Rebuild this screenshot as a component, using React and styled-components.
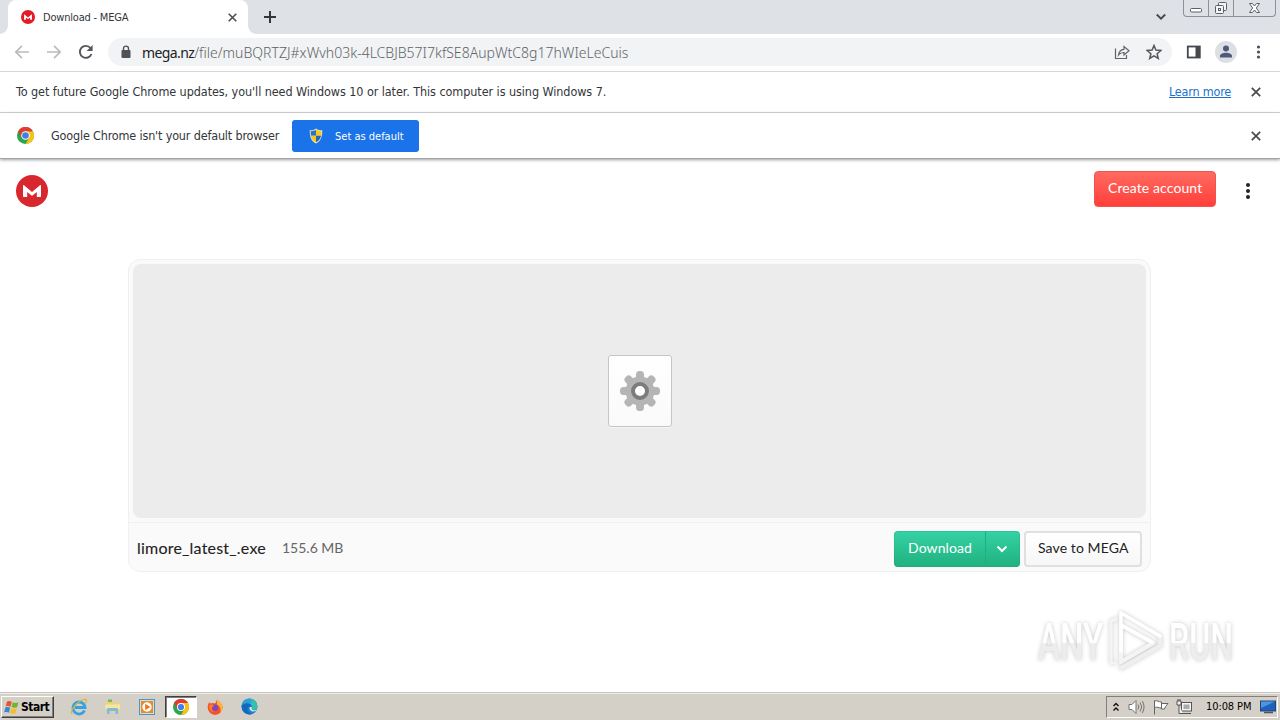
import React from "react";
import styled, { createGlobalStyle, css } from "styled-components";

const GlobalStyle = createGlobalStyle`
    * {
        box-sizing: border-box;
    }
    body {
        margin: 0;
        overflow: hidden;
        background: #fff;
        font-family: "DejaVu Sans Condensed", "DejaVu Sans", sans-serif;
    }
    svg {
        display: block;
        flex: none;
    }
`;

const Screen = styled.div`
    width: 1280px;
    height: 720px;
    display: flex;
    flex-direction: column;
    overflow: hidden;
`;

const Label = styled.span`
    flex: none;
    width: ${(p) => p.$width}px;
    padding-bottom: ${(p) => p.$lift || 0}px;
    white-space: nowrap;
    font-size: ${(p) => p.$size || 12}px;
    letter-spacing: ${(p) => p.$spacing || 0}px;
    color: ${(p) => p.$color || "#333639"};
`;

/* Browser frame */
const TabStrip = styled.div`
    height: 34px;
    flex: none;
    display: flex;
    align-items: flex-start;
    background: #dee1e6;
    padding-left: 8px;
`;
const Tab = styled.div`
    position: relative;
    width: 240px;
    height: 34px;
    display: flex;
    align-items: center;
    padding: 0 11px 0 13px;
    background: #fff;
    border-radius: 8px 8px 0 0;
    &::before,
    &::after {
        content: "";
        position: absolute;
        bottom: 0;
        width: 8px;
        height: 8px;
    }
    &::before {
        left: -8px;
        background: radial-gradient(circle at 0 0, #dee1e6 7.5px, #fff 8px);
    }
    &::after {
        right: -8px;
        background: radial-gradient(circle at 100% 0, #dee1e6 7.5px, #fff 8px);
    }
`;
const TabIcon = styled.div`
    width: 22px;
`;
const Grow = styled.div`
    flex: 1;
`;
const NewTab = styled.div`
    padding: 11px 0 0 16px;
`;
const TabSearch = styled.div`
    padding: 13px 17px 0 0;
`;
const WindowButtons = styled.div`
    display: flex;
    width: 93px;
    height: 17px;
    margin-right: 4px;
    border: 1px solid #8d9096;
    border-top: 0;
    border-radius: 0 0 4px 4px;
`;
const WindowButton = styled.div`
    width: ${(p) => p.$width}px;
    display: flex;
    justify-content: center;
    border-left: ${(p) => (p.$first ? "0" : "1px solid #8d9096")};
`;

const Toolbar = styled.div`
    height: 38px;
    flex: none;
    display: flex;
    align-items: center;
    padding: 0 16px 1px 14px;
    background: #fff;
    border-bottom: 1px solid #d5d7da;
`;
const NavButtons = styled.div`
    display: flex;
    gap: 16px;
    width: 94px;
`;
const AddressBar = styled.div`
    width: 1064px;
    height: 28px;
    display: flex;
    align-items: center;
    padding: 0 10px 0 12px;
    border-radius: 14px;
    background: #f1f3f4;
`;
const LockBox = styled.div`
    width: 22px;
`;
const Url = styled.span`
    flex: 1;
    white-space: nowrap;
    font-family: "Noto Sans", "DejaVu Sans Condensed", sans-serif;
    font-weight: 300;
    font-size: 14px;
    letter-spacing: 0.01px;
    color: #5f6368;
`;
const UrlHost = styled.span`
    font-weight: 400;
    letter-spacing: -0.6px;
    color: #202124;
`;
const AddressIcons = styled.div`
    display: flex;
    gap: 16px;
`;
const ToolbarIcons = styled.div`
    flex: 1;
    display: flex;
    align-items: center;
    justify-content: space-between;
    padding-left: 14px;
`;
const Avatar = styled.div`
    width: 22px;
    height: 22px;
    margin-right: 3px;
    border-radius: 50%;
    background: #dcdfe4;
`;

const InfoBar = styled.div`
    height: ${(p) => p.$height}px;
    flex: none;
    display: flex;
    align-items: center;
    padding: 0 19px 0 16px;
    background: #fff;
    border-bottom: 1px solid #d5d7da;
    ${(p) =>
        p.$last &&
        css`
            position: relative;
            border-bottom-color: #a3a3a3;
            box-shadow: 0 1px 3px rgba(0, 0, 0, 0.38);
        `}
`;
const LearnMore = styled(Label)`
    margin-right: 19px;
    text-decoration: underline;
`;
const InfoIcon = styled.div`
    width: 35px;
    padding-left: 1px;
`;
const DefaultButton = styled.div`
    width: 127px;
    height: 32px;
    display: flex;
    align-items: center;
    gap: 12px;
    padding-left: 17px;
    background: #1a73e8;
    border-radius: 3px;
`;
const DefaultLabel = styled(Label)`
    padding-top: 1px;
`;

/* Page */
const Page = styled.main`
    flex: 1;
    min-height: 0;
    display: flex;
    flex-direction: column;
    font-family: Lato, sans-serif;
`;
const PageHeader = styled.header`
    height: 100px;
    flex: none;
    display: flex;
    align-items: flex-start;
    justify-content: space-between;
    padding: 12px 29px 0 16px;
`;
const LogoBox = styled.div`
    padding-top: 4px;
`;
const HeaderActions = styled.div`
    display: flex;
    align-items: flex-start;
    gap: 29px;
`;
const MenuDots = styled.div`
    padding-top: 10px;
`;
const Button = styled.div`
    height: 36px;
    width: ${(p) => p.$width}px;
    padding-left: 14px;
    line-height: 33px;
    font-size: 14px;
    letter-spacing: ${(p) => p.$spacing || 0}px;
    white-space: nowrap;
    border-radius: 4px;
    color: #fff;
`;
const CreateButton = styled(Button)`
    background: linear-gradient(#ff6a60, #ff3f3a);
    border: 1px solid #f0544d;
    padding-left: 13px;
    line-height: 32px;
`;
const Card = styled.section`
    width: 1023px;
    height: 313px;
    flex: none;
    display: flex;
    flex-direction: column;
    margin-left: 128px;
    border: 1px solid #f0f0f0;
    border-radius: 12px;
    overflow: hidden;
    background: #fafafa;
`;
const Preview = styled.div`
    height: 254px;
    margin: 4px;
    display: flex;
    align-items: center;
    justify-content: center;
    border-radius: 8px;
    background: #ececec;
`;
const FileTile = styled.div`
    width: 64px;
    height: 72px;
    display: flex;
    align-items: center;
    justify-content: center;
    border: 1px solid #c6c6c6;
    border-radius: 3px;
    background: linear-gradient(#fff, #fafafa);
    box-shadow: 0 1px 1px #f7f7f7;
`;
const CardFooter = styled.div`
    flex: 1;
    display: flex;
    align-items: center;
    padding: 3px 8px 0 8px;
    border-top: 1px solid #f0f0f0;
`;
const FileName = styled(Label)`
    -webkit-text-stroke: 0.1px #222;
`;
const DownloadGroup = styled.div`
    display: flex;
    width: 126px;
    margin-right: 4px;
    border-radius: 4px;
    background: linear-gradient(#35d2a5, #20b17f);
    box-shadow: inset 0 0 0 1px rgba(20, 150, 105, 0.2);
`;
const DropArrow = styled.div`
    width: 35px;
    display: flex;
    align-items: center;
    justify-content: center;
    padding-right: 2px;
    border-left: 1px solid #22ae80;
`;
const SaveButton = styled(Button)`
    padding-left: 12px;
    line-height: 30px;
    color: #222;
    border: 2px solid #e0e0e0;
    background: linear-gradient(#fff, #f7f7f7);
`;

/* Watermark floats over the page */
const Watermark = styled.div`
    position: absolute;
    left: 1038px;
    top: 606px;
    width: 195px;
    height: 70px;
    display: flex;
    align-items: center;
    justify-content: space-between;
    filter: drop-shadow(0 0 2px rgba(0, 0, 0, 0.22));
`;
const WordSlot = styled.div`
    width: 64px;
    padding-top: 3px;
`;
const WatermarkWord = styled.div`
    width: max-content;
    font-family: Roboto, sans-serif;
    font-weight: 500;
    font-size: 51px;
    line-height: 70px;
    transform: scaleX(${(p) => p.$stretch});
    transform-origin: 0 50%;
    background: linear-gradient(#fff 49%, #ededed 51%);
    background-clip: text;
    color: transparent;
`;

/* Windows taskbar */
const Taskbar = styled.footer`
    height: 28px;
    flex: none;
    display: flex;
    align-items: center;
    padding: 0 2px 0 1px;
    background: #d4d0c8;
    border-top: 1px solid #c9c6bf;
    box-shadow: inset 0 1px 0 #efede8;
`;
const StartButton = styled.div`
    width: 53px;
    height: 22px;
    display: flex;
    align-items: center;
    gap: 1px;
    padding-left: 1px;
    border: 1px solid;
    border-color: #fff #404040 #404040 #fff;
    box-shadow: inset -1px -1px 0 #808080;
    font-weight: 700;
`;
const QuickLaunch = styled.div`
    display: flex;
    margin-left: 8px;
`;
const TaskItem = styled.div`
    width: 34px;
    height: 22px;
    display: flex;
    align-items: center;
    justify-content: center;
    ${(p) =>
        p.$active &&
        css`
            width: 32px;
            margin: 0 1px;
            background: #fff;
            border: 1px solid;
            border-color: #404040 #fff #fff #404040;
            box-shadow: inset 1px 1px 0 #808080;
        `}
`;
const Tray = styled.div`
    width: 172px;
    height: 22px;
    display: flex;
    align-items: center;
    padding-left: 6px;
    border: 1px solid;
    border-color: #808080 #fff #fff #808080;
`;
const TraySlot = styled.div`
    width: ${(p) => p.$width}px;
`;

const CloseIcon = ({ size = 10, color = "#4b4e52", stroke = 1.8 }) => (
    <svg width={size} height={size} viewBox="0 0 10 10">
        <path d="M.8.8l8.4 8.4M9.2.8L.8 9.2" stroke={color} strokeWidth={stroke} />
    </svg>
);

const MegaLogo = ({ size, color = "#d9272e" }) => (
    <svg width={size} height={size} viewBox="0 0 32 32">
        <circle cx="16" cy="16" r="16" fill={color} />
        <path
            d="M7 21.500V10.700c0-.6.600-.8 1-.4l8 6.700 8-6.700c.4-.4 1-.2 1 .4v10.800c0 .3-.2.500-.5.500h-3.200c-.3 0-.5-.2-.5-.5v-4.600l-4.300 3.600c-.3.300-.7.300-1 0l-4.300-3.600v4.600c0 .3-.2.500-.5.500H7.500c-.3 0-.5-.2-.5-.5z"
            fill="#fff"
        />
    </svg>
);

const ChromeIcon = ({ size }) => (
    <svg width={size} height={size} viewBox="0 0 32 32">
        <circle cx="16" cy="16" r="16" fill="#2da44e" />
        <path d="M16 8h13.860A16 16 0 0 1 16 32l6.930-12z" fill="#fbc116" />
        <path d="M2.140 8A16 16 0 0 1 29.860 8H16v8l-6.930 4z" fill="#e33b2e" />
        <circle cx="16" cy="16" r="8" fill="#fff" />
        <circle cx="16" cy="16" r="6.200" fill="#3f7fe8" />
    </svg>
);

const ShieldIcon = () => (
    <svg width="14" height="16" viewBox="0 0 14 16">
        <path d="M7 .5c2 1.500 4 1.700 6.300 1.700 0 6-1 10.500-6.300 13.300C1.700 12.700.7 8.200.7 2.200 3 2.200 5 2 7 .5z" fill="#e8e3bb" />
        <path d="M7 1.800v6H2C1.800 6.400 1.700 4.800 1.700 3.200 3.800 3.100 5.400 2.900 7 1.800z" fill="#2f72c4" />
        <path d="M7 1.800v6h5c.2-1.400.3-3 .3-4.600C10.200 3.100 8.600 2.900 7 1.800z" fill="#f5c721" />
        <path d="M2 7.800h5v6.500C4 12.600 2.500 10.500 2 7.800z" fill="#f5c721" />
        <path d="M12 7.800H7v6.500c3-1.700 4.500-3.800 5-6.500z" fill="#2566b5" />
    </svg>
);

const Dots = ({ size, r, gap, color }) => (
    <svg width="6" height={size} viewBox={`0 0 6 ${size}`} fill={color}>
        {[-1, 0, 1].map((n) => (
            <circle key={n} cx="3" cy={size / 2 + n * gap} r={r} />
        ))}
    </svg>
);

const GearIcon = () => (
    <svg width="42" height="42" viewBox="-21 -21 42 42">
        <g fill="#b5b5b5">
            {[0, 45, 90, 135].map((angle) => (
                <rect key={angle} x="-4" y="-20" width="8" height="40" rx="3.500" transform={`rotate(${angle})`} />
            ))}
            <circle r="14.500" />
        </g>
        <circle r="7" fill="#fff" stroke="#7c7c7c" strokeWidth="4" />
    </svg>
);

const PlayMark = () => (
    <svg width="58" height="64" viewBox="0 0 58 64" fill="none" strokeLinejoin="round" strokeLinecap="round">
        <path d="M9 10l-5 2v42h4" stroke="#f4f4f4" strokeWidth="3" />
        <path d="M14 52V16l32 18-32 19" stroke="#f4f4f4" strokeWidth="4" />
        <path d="M14 59l39-22v-9" stroke="#efefef" strokeWidth="4" />
        <path d="M14 42V4l39 23M14 16l31 17" stroke="#fff" strokeWidth="3.500" />
    </svg>
);

const NavIcons = () => (
    <NavButtons>
        <svg width="16" height="16" viewBox="0 0 16 16" fill="none" stroke="#b9bbbe" strokeWidth="1.700">
            <path d="M15 8H2M8 1.800L1.800 8 8 14.200" />
        </svg>
        <svg width="16" height="16" viewBox="0 0 16 16" fill="none" stroke="#b9bbbe" strokeWidth="1.700">
            <path d="M1 8h13M8 1.800L14.200 8 8 14.200" />
        </svg>
        <svg width="16" height="16" viewBox="0 0 16 16">
            <path d="M13.500 10A6 6 0 1 1 12.500 4" fill="none" stroke="#53565a" strokeWidth="1.900" />
            <path d="M14.600 1v6H8.600z" fill="#53565a" />
        </svg>
    </NavButtons>
);

const BrowserFrame = () => (
    <>
        <TabStrip>
            <Tab>
                <TabIcon>
                    <MegaLogo size={14} color="#e21b24" />
                </TabIcon>
                <Label $width={86} $size={11} $spacing={-0.2}>
                    Download - MEGA
                </Label>
                <Grow />
                <CloseIcon size={9} />
            </Tab>
            <NewTab>
                <svg width="12" height="12" viewBox="0 0 12 12">
                    <path d="M6 0v12M0 6h12" stroke="#33363b" strokeWidth="2" />
                </svg>
            </NewTab>
            <Grow />
            <TabSearch>
                <svg width="10" height="8" viewBox="0 0 10 8">
                    <path d="M.8 1.500L5 5.700 9.200 1.500" fill="none" stroke="#44474b" strokeWidth="1.800" />
                </svg>
            </TabSearch>
            <WindowButtons>
                <WindowButton $first $width={24}>
                    <svg width="14" height="16" viewBox="0 0 14 16">
                        <rect x="1.500" y="8.500" width="11" height="3.500" rx="1" fill="#fff" stroke="#5d6065" />
                    </svg>
                </WindowButton>
                <WindowButton $width={25}>
                    <svg width="14" height="16" viewBox="0 0 14 16" fill="#f4f5f7" stroke="#5d6065">
                        <rect x="4.500" y="2.500" width="8" height="8" rx="1" />
                        <rect x="1.500" y="5.500" width="8" height="8" rx="1" />
                        <rect x="4.500" y="8.500" width="2" height="2" />
                    </svg>
                </WindowButton>
                <WindowButton $width={42}>
                    <svg width="13" height="16" viewBox="0 0 13 16">
                        <path
                            d="M1.500 3.500h3l2 2.500 2-2.500h3L8.300 8l3.200 4.500h-3l-2-2.500-2 2.500h-3L4.700 8z"
                            fill="#fff"
                            stroke="#5d6065"
                        />
                    </svg>
                </WindowButton>
            </WindowButtons>
        </TabStrip>
        <Toolbar>
            <NavIcons />
            <AddressBar>
                <LockBox>
                    <svg width="12" height="14" viewBox="0 0 12 14">
                        <rect x="1.500" y="5" width="9" height="8" rx="1" fill="#4f5357" />
                        <path d="M3.500 5.500V3.600a2.500 2.500 0 0 1 5 0v1.900" fill="none" stroke="#4f5357" strokeWidth="1.400" />
                    </svg>
                </LockBox>
                <Url>
                    <UrlHost>mega.nz</UrlHost>/file/muBQRTZJ#xWvh03k-4LCBJB57I7kfSE8AupWtC8g17hWIeLeCuis
                </Url>
                <AddressIcons>
                    <svg width="16" height="16" viewBox="0 0 16 16" fill="none" stroke="#5f6368" strokeWidth="1.200">
                        <path d="M1.500 4.500v10h11V11" />
                        <path d="M4.500 11c.5-4 2.500-5.500 5.500-5.700V2.500l5 4.300-5 4.200V8.500c-2.500 0-4 .5-5.500 2.500z" />
                    </svg>
                    <svg width="16" height="16" viewBox="0 0 16 16">
                        <path
                            d="M8 1.500l1.900 4.600 5 .4-3.800 3.200 1.200 4.800L8 11.900l-4.300 2.600 1.200-4.800L1.100 6.500l5-.4z"
                            fill="none"
                            stroke="#55595e"
                            strokeWidth="1.500"
                        />
                    </svg>
                </AddressIcons>
            </AddressBar>
            <ToolbarIcons>
                <svg width="15" height="14" viewBox="0 0 15 14">
                    <rect x="1.800" y="1.500" width="12" height="11" fill="none" stroke="#45484c" strokeWidth="1.800" />
                    <path d="M9.500 1h4.500v12H9.500z" fill="#45484c" />
                </svg>
                <Avatar>
                    <svg width="22" height="22" viewBox="0 0 22 22" fill="#4d5a78">
                        <circle cx="11" cy="7.500" r="3" />
                        <path d="M5 16.500v-1.500c0-2.200 3.500-3.200 6-3.200s6 1 6 3.200v1.500z" />
                    </svg>
                </Avatar>
                <svg width="11" height="16" viewBox="0 0 11 16" fill="#4c4f53">
                    <circle cx="5.500" cy="3" r="1.600" />
                    <circle cx="5.500" cy="8" r="1.600" />
                    <circle cx="5.500" cy="13" r="1.600" />
                </svg>
            </ToolbarIcons>
        </Toolbar>
        <InfoBar $height={41}>
            <Label $width={700} $size={12.5} $spacing={-0.07} $lift={2}>
                To get future Google Chrome updates, you'll need Windows 10 or later. This computer is using Windows 7.
            </Label>
            <Grow />
            <LearnMore $width={63} $size={12.5} $spacing={-0.2} $lift={2} $color="#1a73c8">
                Learn more
            </LearnMore>
            <CloseIcon />
        </InfoBar>
        <InfoBar $height={46} $last>
            <InfoIcon>
                <ChromeIcon size={17} />
            </InfoIcon>
            <Label $width={241} $size={12.5} $spacing={-0.17}>
                Google Chrome isn't your default browser
            </Label>
            <DefaultButton>
                <ShieldIcon />
                <DefaultLabel $width={70} $size={11} $color="#fff">
                    Set as default
                </DefaultLabel>
            </DefaultButton>
            <Grow />
            <CloseIcon />
        </InfoBar>
    </>
);

const DownloadPage = () => (
    <Page>
        <PageHeader>
            <LogoBox>
                <MegaLogo size={32} />
            </LogoBox>
            <HeaderActions>
                <CreateButton $width={122} $spacing={0.1}>
                    Create account
                </CreateButton>
                <MenuDots>
                    <Dots size={20} r={2} gap={6} color="#222" />
                </MenuDots>
            </HeaderActions>
        </PageHeader>
        <Card>
            <Preview>
                <FileTile>
                    <GearIcon />
                </FileTile>
            </Preview>
            <CardFooter>
                <FileName $width={145} $size={16} $spacing={0.21} $lift={2} $color="#222">
                    limore_latest_.exe
                </FileName>
                <Label $width={70} $size={14} $lift={2} $color="#666">
                    155.6 MB
                </Label>
                <Grow />
                <DownloadGroup>
                    <Button $width={91} $spacing={0.1}>
                        Download
                    </Button>
                    <DropArrow>
                        <svg width="12" height="8" viewBox="0 0 12 8">
                            <path d="M1.500 1.500L6 6l4.500-4.500" fill="none" stroke="#fff" strokeWidth="2" />
                        </svg>
                    </DropArrow>
                </DownloadGroup>
                <SaveButton $width={118} $spacing={0.1}>
                    Save to MEGA
                </SaveButton>
            </CardFooter>
        </Card>
        <Watermark>
            <WordSlot>
                <WatermarkWord $stretch={0.65}>ANY</WatermarkWord>
            </WordSlot>
            <PlayMark />
            <WordSlot>
                <WatermarkWord $stretch={0.63}>RUN</WatermarkWord>
            </WordSlot>
        </Watermark>
    </Page>
);

const WindowsTaskbar = () => (
    <Taskbar>
        <StartButton>
            <svg width="17" height="16" viewBox="0 0 16 16">
                <path d="M3.500 2.500C5.500 1.500 7 2 8.300 2.800L7 7.800C5.500 7 4 6.700 2.200 7.500z" fill="#e4572e" />
                <path d="M9.300 3.200c1.700.9 3.500 1 5.700 0l-1.400 5c-2 .8-3.800.8-5.600-.1z" fill="#77b32b" />
                <path d="M1.900 8.500c1.800-.8 3.400-.5 4.800.3l-1.300 5C4 13 2.500 12.800.5 13.500z" fill="#3a86d0" />
                <path d="M7.700 9.200c1.800.9 3.600 1 5.600.1l-1.400 5c-2 .8-3.700.7-5.500-.2z" fill="#f6bd26" />
            </svg>
            <Label $width={30} $size={12} $color="#000" $spacing={-0.5}>
                Start
            </Label>
        </StartButton>
        <QuickLaunch>
            <TaskItem>
                <svg width="18" height="18" viewBox="0 0 18 18" fill="none">
                    <path d="M14.500 12.500A6 6 0 1 1 15 9.500H5" stroke="#35a3e0" strokeWidth="2.800" />
                    <path d="M2 16C-.5 12 8 3 14 1.500c3-.5 3 1.500 1.500 4" stroke="#e2b23c" strokeWidth="1.200" />
                </svg>
            </TaskItem>
            <TaskItem>
                <svg width="18" height="18" viewBox="0 0 18 18">
                    <path d="M2 3h6l1 1.500h6.500V14H2z" fill="#ecd27a" />
                    <path d="M4 1.500h4V4H4z" fill="#75b95c" />
                    <path d="M1.500 6.500h14.500V11H1.500z" fill="#f6e6a6" />
                    <path d="M3 16v-4.500c0-1 .5-1.500 1.500-1.500h8c1 0 1.500.5 1.500 1.500V16h-2.500v-3h-6v3z" fill="#7fbbdc" />
                </svg>
            </TaskItem>
            <TaskItem>
                <svg width="16" height="16" viewBox="0 0 16 16">
                    <rect x=".5" y=".5" width="15" height="15" fill="#c8e1f2" stroke="#4d94c7" />
                    <rect x="2" y="2" width="12" height="12" fill="#f08a1d" />
                    <circle cx="8" cy="8" r="4.700" fill="#fff" />
                    <path d="M6.200 4.800v6.400L11.300 8z" fill="#e87912" />
                </svg>
            </TaskItem>
            <TaskItem $active>
                <ChromeIcon size={16} />
            </TaskItem>
            <TaskItem>
                <svg width="16" height="16" viewBox="0 0 16 16">
                    <path d="M10 .5c1 2 5.500 3 5.500 8a7.400 7.400 0 0 1-14.800 0C.7 6 1.500 4 2.500 3c.2 1 .5 1.500 1 1.500C5 3.500 7 4 8 4.500 9 3.500 9.500 2 10 .5z" fill="#f5522b" />
                    <path d="M10 .5c1 2 5.500 3 5.500 8 0 2-1 4-2 5 .5-4-.5-6-3.500-8z" fill="#fdb92c" />
                    <circle cx="8" cy="8.700" r="3.200" fill="#8246c5" />
                    <path d="M2.500 6c1.500-1 3-.5 4.500.5L5 8.500c-1 2 1 3.500 3 3.500-3 1.700-7-1-5.500-6z" fill="#fb7d27" />
                </svg>
            </TaskItem>
            <TaskItem>
                <svg width="17" height="17" viewBox="0 0 16 16">
                    <circle cx="8" cy="8" r="7.500" fill="#1583d0" />
                    <path d="M.6 7A7.500 7.500 0 0 1 15.500 8c0 2.500-2 3.500-4 3.300-2-.3-1.500-1.300-1.300-2.300C10 4.500 4 3.500.6 7z" fill="#35bfae" />
                    <path d="M.6 7A7.500 7.500 0 0 1 7 .6C11 .5 10 5 8.500 5.300 6 4 2.500 4.500.6 7z" fill="#2c9fd8" />
                    <path d="M.6 7C4 3.500 10 4.500 10.200 8.500 8 6.500 5 9 6.500 12c1 2 2.500 3 4.500 3C5 17 0 12 .6 7z" fill="#1369bd" />
                    <path d="M8.500 8.500c1.200 0 1.700 0 1.700.5-.5 1.500.3 2.300 1.800 2.600 1.200.1 2.300-.1 3.200-.7-1 1.800-3.400 2.300-5.200 1.500-2-.9-2.500-2.900-1.500-3.900z" fill="#e4e4e0" />
                </svg>
            </TaskItem>
        </QuickLaunch>
        <Grow />
        <Tray>
            <TraySlot $width={15}>
                <svg width="6" height="10" viewBox="0 0 6 10" fill="none" stroke="#111" strokeWidth="1.400">
                    <path d="M.5 4L3 1.500 5.500 4M.5 8.500L3 6l2.500 2.500" />
                </svg>
            </TraySlot>
            <TraySlot $width={25}>
                <svg width="17" height="16" viewBox="0 0 17 16" fill="none" stroke="#747474">
                    <path d="M1 5.500h3L8 1.500v13l-4-4H1z" fill="#fff" />
                    <path d="M10 5.500q1.500 2.500 0 5M12.200 3.500q3 4.500 0 9M14.300 2q3.500 6 0 12" />
                </svg>
            </TraySlot>
            <TraySlot $width={23}>
                <svg width="16" height="16" viewBox="0 0 16 16" fill="#fff" stroke="#666">
                    <path d="M1.500 1.500v14M1.500 2c3-1 4 1 7 1v6c-3 0-4-1.500-7-.5zM8.500 4.500h6.500l-2.500 3-1 2.500h-3z" />
                </svg>
            </TraySlot>
            <TraySlot $width={30}>
                <svg width="17" height="16" viewBox="0 0 17 16" fill="#f4f4f4" stroke="#555">
                    <rect x="5.500" y="3.500" width="10" height="8.500" />
                    <rect x="7.500" y="5.500" width="6" height="4.500" fill="#aaa" stroke="none" />
                    <path d="M7 14.500h8M1 2v4h4V2zM2 0v2M4 0v2M3 6v8.500h4" />
                </svg>
            </TraySlot>
            <Label $width={54} $size={11} $color="#000" $spacing={-0.1}>
                10:08 PM
            </Label>
            <svg width="16" height="14" viewBox="0 0 16 14">
                <rect x=".5" y="1" width="15" height="10" fill="#1f62bd" stroke="#20477c" />
                <path d="M1 1.500h14L1 8z" fill="#4f94e0" />
                <path d="M4 12.500h9" stroke="#555" strokeWidth="1.500" />
            </svg>
        </Tray>
    </Taskbar>
);

const App = () => (
    <>
        <GlobalStyle />
        <Screen>
            <BrowserFrame />
            <DownloadPage />
            <WindowsTaskbar />
        </Screen>
    </>
);

export default App;
